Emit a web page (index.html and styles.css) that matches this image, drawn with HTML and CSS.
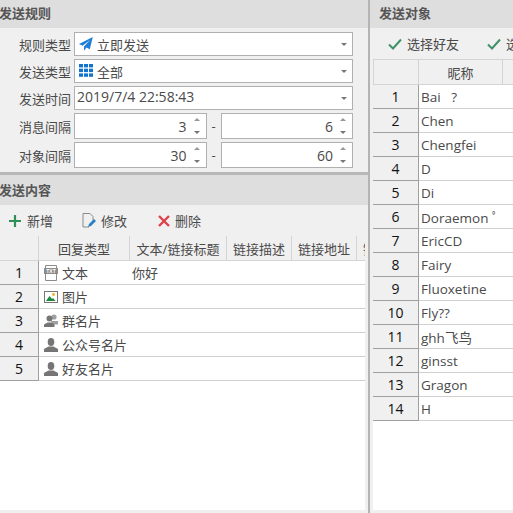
FILE: index.html
```html
<!DOCTYPE html>
<html lang="zh-CN">
<head>
  <meta charset="UTF-8">
  <title>发送规则</title>
  <link rel="stylesheet" href="styles.css">
</head>
<body>
  <div class="left-panel">
    <div class="panel-title">发送规则</div>
    <div class="rule-form">
      <div class="form-row">
        <label>规则类型</label>
        <div class="field select">
          <svg class="field-icon" width="14" height="14" viewBox="0 0 14 14"><path d="M13.8 0 L0 7 L3.6 8.8 L11 3 L5 9.6 L5 13.8 L7.4 10.6 L10.8 12.2 Z" fill="#1f7fd6"/></svg>
          <span>立即发送</span>
          <i class="drop"></i>
        </div>
      </div>
      <div class="form-row">
        <label>发送类型</label>
        <div class="field select">
          <svg class="field-icon" width="14" height="14" viewBox="0 0 14 14" fill="#1273cc"><rect x="0" y="0" width="4" height="3.4"/><rect x="5" y="0" width="4" height="3.4"/><rect x="10" y="0" width="4" height="3.4"/><rect x="0" y="4.7" width="4" height="3.4"/><rect x="5" y="4.7" width="4" height="3.4"/><rect x="10" y="4.7" width="4" height="3.4"/><rect x="0" y="9.4" width="4" height="3.4"/><rect x="5" y="9.4" width="4" height="3.4"/><rect x="10" y="9.4" width="4" height="3.4"/></svg>
          <span>全部</span>
          <i class="drop"></i>
        </div>
      </div>
      <div class="form-row">
        <label>发送时间</label>
        <div class="field select date">
          <span>2019/7/4 22:58:43</span>
          <i class="drop"></i>
        </div>
      </div>
      <div class="form-row tall">
        <label>消息间隔</label>
        <div class="field spin"><span>3</span><b class="spinner"><i class="up"></i><i class="down"></i></b></div>
        <em class="dash">-</em>
        <div class="field spin"><span>6</span><b class="spinner"><i class="up"></i><i class="down"></i></b></div>
      </div>
      <div class="form-row tall">
        <label>对象间隔</label>
        <div class="field spin"><span>30</span><b class="spinner"><i class="up"></i><i class="down"></i></b></div>
        <em class="dash">-</em>
        <div class="field spin"><span>60</span><b class="spinner"><i class="up"></i><i class="down"></i></b></div>
      </div>
    </div>
    <div class="panel-title second">发送内容</div>
    <div class="toolbar">
      <span class="tool add">
        <svg width="12" height="12" viewBox="0 0 12 12"><path d="M4.9 0h2.2v4.9H12v2.2H7.1V12H4.9V7.1H0V4.9h4.9z" fill="#2f8f57"/></svg>
        新增
      </span>
      <span class="tool edit">
        <svg width="14" height="15" viewBox="0 0 14 15"><path d="M1 .5h7l3 3v4M1 .5v13.5h6" fill="none" stroke="#8a8a8a"/><path d="M6 14l1-3 5-5 2 2-5 5z" fill="#2a80c8"/></svg>
        修改
      </span>
      <span class="tool del">
        <svg width="12" height="12" viewBox="0 0 12 12"><path d="M1 1l10 10M11 1L1 11" stroke="#e0404a" stroke-width="2.4"/></svg>
        删除
      </span>
    </div>
    <div class="grid-box">
      <table class="grid content-grid">
        <colgroup><col class="c-idx"><col class="c-type"><col class="c-text"><col class="c-link"><col class="c-link"><col class="c-link"></colgroup>
        <tr class="head"><th></th><th>回复类型</th><th>文本/链接标题</th><th>链接描述</th><th>链接地址</th><th>链接图片</th></tr>
        <tr>
          <td class="idx">1</td>
          <td><div class="type-cell">
            <svg width="14" height="16" viewBox="0 0 14 16"><path d="M1.5 .5h11v15h-11z" fill="#fff" stroke="#8c8c8c"/><rect x="0" y="3" width="14" height="6" fill="#8c8c8c"/><text x="7" y="8" font-size="5" font-family="Liberation Sans" font-weight="bold" fill="#fff" text-anchor="middle">TXT</text></svg>
            文本</div></td>
          <td>你好</td><td></td><td></td><td></td>
        </tr>
        <tr>
          <td class="idx">2</td>
          <td><div class="type-cell">
            <svg width="14" height="12" viewBox="0 0 14 12"><rect x=".5" y=".5" width="13" height="11" fill="#fff" stroke="#777"/><path d="M2 10l3.5-5 2.5 3 1-1 2.5 3z" fill="#178a3c"/><circle cx="9.5" cy="3.5" r="1.4" fill="#f2b01e"/></svg>
            图片</div></td>
          <td></td><td></td><td></td><td></td>
        </tr>
        <tr>
          <td class="idx">3</td>
          <td><div class="type-cell">
            <svg width="14" height="13" viewBox="0 0 14 13" fill="#757575"><circle cx="10" cy="3" r="2.6" fill="#a0a0a0"/><path d="M7 7h7v3.5H8z" fill="#a0a0a0"/><circle cx="5.5" cy="4.5" r="3"/><path d="M0 13v-2.5l3.5-2h4l3 2V13z"/></svg>
            群名片</div></td>
          <td></td><td></td><td></td><td></td>
        </tr>
        <tr>
          <td class="idx">4</td>
          <td><div class="type-cell">
            <svg width="14" height="14" viewBox="0 0 14 14" fill="#757575"><ellipse cx="7" cy="4" rx="3.3" ry="4"/><path d="M0 14v-3l4.5-2.5h5L14 11v3z"/></svg>
            公众号名片</div></td>
          <td></td><td></td><td></td><td></td>
        </tr>
        <tr>
          <td class="idx">5</td>
          <td><div class="type-cell">
            <svg width="14" height="14" viewBox="0 0 14 14" fill="#757575"><ellipse cx="7" cy="4" rx="3.3" ry="4"/><path d="M0 14v-3l4.5-2.5h5L14 11v3z"/></svg>
            好友名片</div></td>
          <td></td><td></td><td></td><td></td>
        </tr>
      </table>
    </div>
  </div>
  <div class="splitter"></div>
  <div class="right-panel">
    <div class="panel-title">发送对象</div>
    <div class="toolbar">
      <span class="tool pick">
        <svg width="14" height="12" viewBox="0 0 14 12"><path d="M1 6.5l4 4L13 1.5" fill="none" stroke="#3f9167" stroke-width="2"/></svg>
        选择好友
      </span>
      <span class="tool pick">
        <svg width="14" height="12" viewBox="0 0 14 12"><path d="M1 6.5l4 4L13 1.5" fill="none" stroke="#3f9167" stroke-width="2"/></svg>
        选择群组
      </span>
    </div>
    <div class="grid-box">
      <table class="grid target-grid">
        <colgroup><col class="t-idx"><col class="t-name"><col class="t-tag"></colgroup>
        <tr class="head"><th></th><th>昵称</th><th>标签</th></tr>
        <tr><td class="idx">1</td><td>Bai &nbsp;&nbsp;?</td><td></td></tr>
        <tr><td class="idx">2</td><td>Chen</td><td></td></tr>
        <tr><td class="idx">3</td><td>Chengfei</td><td></td></tr>
        <tr><td class="idx">4</td><td>D</td><td></td></tr>
        <tr><td class="idx">5</td><td>Di</td><td></td></tr>
        <tr><td class="idx">6</td><td>Doraemon ﾟ</td><td></td></tr>
        <tr><td class="idx">7</td><td>EricCD</td><td></td></tr>
        <tr><td class="idx">8</td><td>Fairy</td><td></td></tr>
        <tr><td class="idx">9</td><td>Fluoxetine</td><td></td></tr>
        <tr><td class="idx">10</td><td>Fly??</td><td></td></tr>
        <tr><td class="idx">11</td><td>ghh飞鸟</td><td></td></tr>
        <tr><td class="idx">12</td><td>ginsst</td><td></td></tr>
        <tr><td class="idx">13</td><td>Gragon</td><td></td></tr>
        <tr><td class="idx">14</td><td>H</td><td></td></tr>
      </table>
    </div>
  </div>
</body>
</html>
```
FILE: styles.css
```css
html, body {
  height: 100%;
}
body {
  margin: 0;
  display: flex;
  overflow: hidden;
  background-color: #f0f0f0;
  color: #4a4a4a;
  font-family: "Open Sans", "Noto Sans CJK SC", sans-serif;
  font-size: 13px;
}
.left-panel {
  width: 368px;
  display: flex;
  flex-direction: column;
  flex-shrink: 0;
}
.splitter {
  width: 2px;
  flex-shrink: 0;
  background-color: #b4b4b4;
}
.right-panel {
  flex: 1;
  min-width: 0;
  display: flex;
  flex-direction: column;
}
.panel-title {
  height: 28px;
  line-height: 27px;
  flex-shrink: 0;
  background-color: #dedede;
  font-weight: bold;
  color: #555;
  text-indent: 9px;
}
.left-panel .panel-title {
  text-indent: -1px;
}
.left-panel .panel-title.second {
  height: 30px;
  line-height: 31px;
  border-top: 3px solid #b8b8b8;
}
.rule-form {
  height: 144px;
  box-sizing: border-box;
  padding: 4px 15px 0 0;
  display: flex;
  flex-direction: column;
  gap: 3px;
}
.form-row {
  height: 24px;
  display: flex;
  align-items: center;
}
.form-row.tall {
  height: 26px;
}
.form-row label {
  width: 74px;
  flex-shrink: 0;
  text-align: right;
  padding-right: 3px;
  box-sizing: border-box;
}
.field {
  flex: 1;
  min-width: 0;
  height: 100%;
  box-sizing: border-box;
  border: 1px solid #b0b0b0;
  background-color: #fff;
  display: flex;
  align-items: center;
  position: relative;
}
.select {
  padding-left: 4px;
}
.select span {
  margin-left: 4px;
}
.date span {
  margin-left: -2px;
  font-size: 14px;
  line-height: 20px;
  padding-bottom: 2px;
}
.field-icon {
  flex-shrink: 0;
}
.drop {
  position: absolute;
  right: 5px;
  top: 10px;
  border-left: 3px solid transparent;
  border-right: 3px solid transparent;
  border-top: 3px solid #777;
}
.spin {
  justify-content: flex-end;
  padding-right: 19px;
  font-size: 14px;
}
.spinner {
  position: absolute;
  right: 6px;
  top: 4px;
  bottom: 4px;
  display: flex;
  flex-direction: column;
  justify-content: space-between;
}
.spinner i {
  display: block;
  border-left: 3px solid transparent;
  border-right: 3px solid transparent;
}
.spinner .up {
  border-bottom: 3px solid #999;
}
.spinner .down {
  border-top: 3px solid #777;
}
.dash {
  width: 14px;
  flex-shrink: 0;
  text-align: center;
  font-style: normal;
}
.toolbar {
  height: 31px;
  flex-shrink: 0;
  display: flex;
  align-items: center;
  white-space: nowrap;
  overflow: hidden;
}
.tool {
  display: flex;
  align-items: center;
  gap: 6px;
}
.tool.add {
  margin-left: 9px;
}
.tool.edit {
  margin-left: 29px;
  gap: 5px;
}
.tool.del {
  margin-left: 31px;
  gap: 5px;
}
.tool.pick {
  margin-left: 18px;
  flex-shrink: 0;
  gap: 5px;
}
.tool.pick + .tool.pick {
  margin-left: 28px;
}
.grid-box {
  flex: 1;
  min-height: 0;
  margin-bottom: 3px;
  background-color: #fff;
  overflow: hidden;
}
.left-panel .grid-box {
  margin-right: 3px;
}
.right-panel .grid-box {
  margin-left: 3px;
}
.grid {
  border-collapse: separate;
  border-spacing: 0;
  table-layout: fixed;
}
.content-grid {
  width: 420px;
}
.target-grid {
  width: 240px;
}
.c-idx { width: 39px; }
.c-type { width: 91px; }
.c-text { width: 97px; }
.c-link { width: 65px; }
.t-idx { width: 46px; }
.t-name { width: 84px; }
.t-tag { width: 110px; }
.grid th {
  height: 24px;
  padding: 0;
  background-color: #f0f0f0;
  border-right: 1px solid #d4d4d4;
  border-bottom: 1px solid #d4d4d4;
  font-weight: normal;
  text-align: center;
  white-space: nowrap;
  overflow: hidden;
}
.target-grid th {
  border-top: 1px solid #d4d4d4;
  height: 24px;
}
.target-grid th:first-child {
  border-left: 1px solid #d4d4d4;
}
.target-grid td {
  font-size: 13.5px;
  padding-left: 1px;
}
.grid td {
  height: 23px;
  padding: 0 0 0 2px;
  border-bottom: 1px solid #d0d0d0;
  white-space: nowrap;
  overflow: hidden;
}
.grid td.idx {
  padding: 0;
  background-color: #f0f0f0;
  border-right: 1px solid #a0a0a0;
  border-bottom: 1px solid #a0a0a0;
  color: #111;
  text-align: center;
  font-size: 14px;
}
.type-cell {
  display: flex;
  align-items: center;
  gap: 4px;
  padding-left: 3px;
}
```
